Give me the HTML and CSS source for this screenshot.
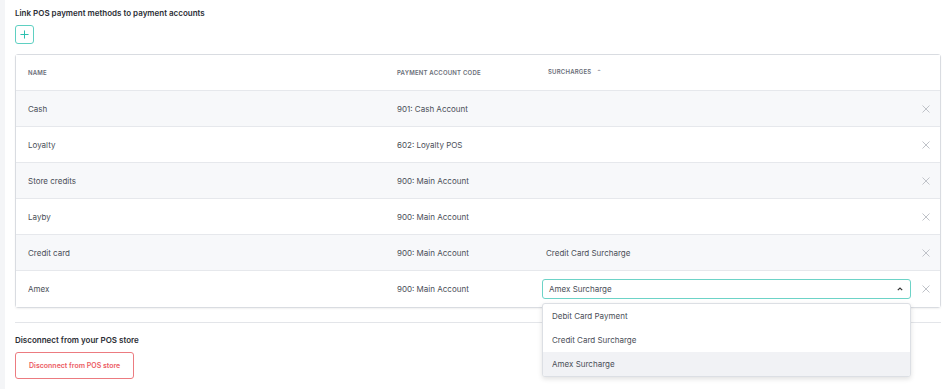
FILE: index.html
```html
<!DOCTYPE html>
<html lang="en">
<head>
    <meta charset="UTF-8">
    <meta name="viewport" content="width=device-width, initial-scale=1.0">
    <title>POS payment methods</title>
    <link rel="stylesheet" href="styles.css">
</head>
<body>
    <div class="page">
        <h2 class="section-title">Link POS payment methods to payment accounts</h2>

        <button class="add-btn" aria-label="Add">
            <svg width="9" height="9" viewBox="0 0 10 10"><path d="M5 0.5v9M0.5 5h9" stroke="#2bbfae" stroke-width="1.1" fill="none"/></svg>
        </button>

        <div class="methods">
            <div class="row head">
                <div>Name</div>
                <div>Payment account code</div>
                <div class="sort">Surcharges <span class="caret">&#710;</span></div>
                <div></div>
            </div>
            <div class="row">
                <div>Cash</div>
                <div>901: Cash Account</div>
                <div class="surcharge"></div>
                <div class="remove"><svg width="8" height="8" viewBox="0 0 8 8"><path d="M0.5 0.5l7 7M7.5 0.5l-7 7" stroke="#b9bcc3" stroke-width="0.9"/></svg></div>
            </div>
            <div class="row">
                <div>Loyalty</div>
                <div>602: Loyalty POS</div>
                <div class="surcharge"></div>
                <div class="remove"><svg width="8" height="8" viewBox="0 0 8 8"><path d="M0.5 0.5l7 7M7.5 0.5l-7 7" stroke="#b9bcc3" stroke-width="0.9"/></svg></div>
            </div>
            <div class="row">
                <div>Store credits</div>
                <div>900: Main Account</div>
                <div class="surcharge"></div>
                <div class="remove"><svg width="8" height="8" viewBox="0 0 8 8"><path d="M0.5 0.5l7 7M7.5 0.5l-7 7" stroke="#b9bcc3" stroke-width="0.9"/></svg></div>
            </div>
            <div class="row">
                <div>Layby</div>
                <div>900: Main Account</div>
                <div class="surcharge"></div>
                <div class="remove"><svg width="8" height="8" viewBox="0 0 8 8"><path d="M0.5 0.5l7 7M7.5 0.5l-7 7" stroke="#b9bcc3" stroke-width="0.9"/></svg></div>
            </div>
            <div class="row">
                <div>Credit card</div>
                <div>900: Main Account</div>
                <div class="surcharge">Credit Card Surcharge</div>
                <div class="remove"><svg width="8" height="8" viewBox="0 0 8 8"><path d="M0.5 0.5l7 7M7.5 0.5l-7 7" stroke="#b9bcc3" stroke-width="0.9"/></svg></div>
            </div>
            <div class="row">
                <div>Amex</div>
                <div>900: Main Account</div>
                <div class="select-wrap">
                    <div class="select">
                        <span>Amex Surcharge</span>
                        <svg width="6" height="4" viewBox="0 0 6 4"><path d="M0.8 3.2L3 1l2.2 2.2" stroke="#333" stroke-width="1.2" fill="none"/></svg>
                    </div>
                    <ul class="options">
                        <li>Debit Card Payment</li>
                        <li>Credit Card Surcharge</li>
                        <li class="selected">Amex Surcharge</li>
                    </ul>
                </div>
                <div class="remove"><svg width="8" height="8" viewBox="0 0 8 8"><path d="M0.5 0.5l7 7M7.5 0.5l-7 7" stroke="#b9bcc3" stroke-width="0.9"/></svg></div>
            </div>
        </div>

        <hr class="divider">

        <h2 class="section-title">Disconnect from your POS store</h2>
        <button class="danger-btn">Disconnect from POS store</button>
    </div>
</body>
</html>
```

FILE: styles.css
```css
/* Base */
* {
    margin: 0;
    padding: 0;
    box-sizing: border-box;
}

body {
    font-family: 'Inter', 'Liberation Sans', sans-serif;
    font-size: 8px;
    color: #4a4e57;
    background-color: #f4f5f7;
    padding-left: 5px;
}

.page {
    background-color: #fff;
    min-height: 389px;
    padding: 8px 11px 0 10px;
}

.section-title {
    font-size: 8px;
    font-weight: 600;
    color: #2b2e35;
    line-height: 10px;
}

/* Add button */
.add-btn {
    display: flex;
    align-items: center;
    justify-content: center;
    width: 19px;
    height: 19px;
    margin-top: 7px;
    background: #fff;
    border: 1px solid #5fd0c2;
    border-radius: 3px;
}

/* Table */
.methods {
    margin-top: 10px;
    border: 1px solid #d9dce1;
    border-radius: 3px;
    box-shadow: 0 1px 2px rgba(0,0,0,0.06);
}

.row {
    display: grid;
    grid-template-columns: 369px 145px 369px 1fr;
    align-items: center;
    height: 36px;
    padding-left: 12px;
    border-top: 1px solid #e6e8ec;
    background-color: #fff;
}

.row:nth-child(even) {
    background-color: #f7f8fa;
}

.row:last-child {
    height: 37px;
}

.row.head {
    border-top: none;
    height: 35px;
    font-size: 6px;
    font-weight: 600;
    color: #6a6e78;
    text-transform: uppercase;
    letter-spacing: 0.2px;
}

.row.head .sort {
    padding-left: 6px;
}

.caret {
    font-size: 8px;
    margin-left: 4px;
    vertical-align: -2px;
    color: #8a8e97;
}

.surcharge {
    padding-left: 4px;
}

.remove {
    display: flex;
    justify-content: center;
}

/* Select */
.select-wrap {
    position: relative;
}

.select {
    display: flex;
    align-items: center;
    justify-content: space-between;
    height: 20px;
    padding: 0 7px 0 6px;
    border: 1px solid #6dd3c7;
    border-radius: 3px;
    background: #fff;
}

.options {
    position: absolute;
    top: 24px;
    left: 0;
    right: 0;
    list-style: none;
    background: #fff;
    border: 1px solid #dcdfe4;
    border-radius: 3px;
    box-shadow: 0 2px 5px rgba(0,0,0,0.12);
    overflow: hidden;
    z-index: 10;
}

.options li {
    height: 24px;
    line-height: 24px;
    padding-left: 9px;
}

.options li.selected {
    background-color: #f1f2f5;
}

.divider {
    border: none;
    border-top: 1px solid #e3e5e9;
    margin: 14px 0 12px;
}

/* Danger button */
.danger-btn {
    display: block;
    margin-top: 7px;
    height: 27px;
    padding: 0 13px;
    font-family: inherit;
    font-size: 7px;
    font-weight: 600;
    color: #ec5b63;
    background: #fff;
    border: 1px solid #ec7b80;
    border-radius: 3px;
}
```
